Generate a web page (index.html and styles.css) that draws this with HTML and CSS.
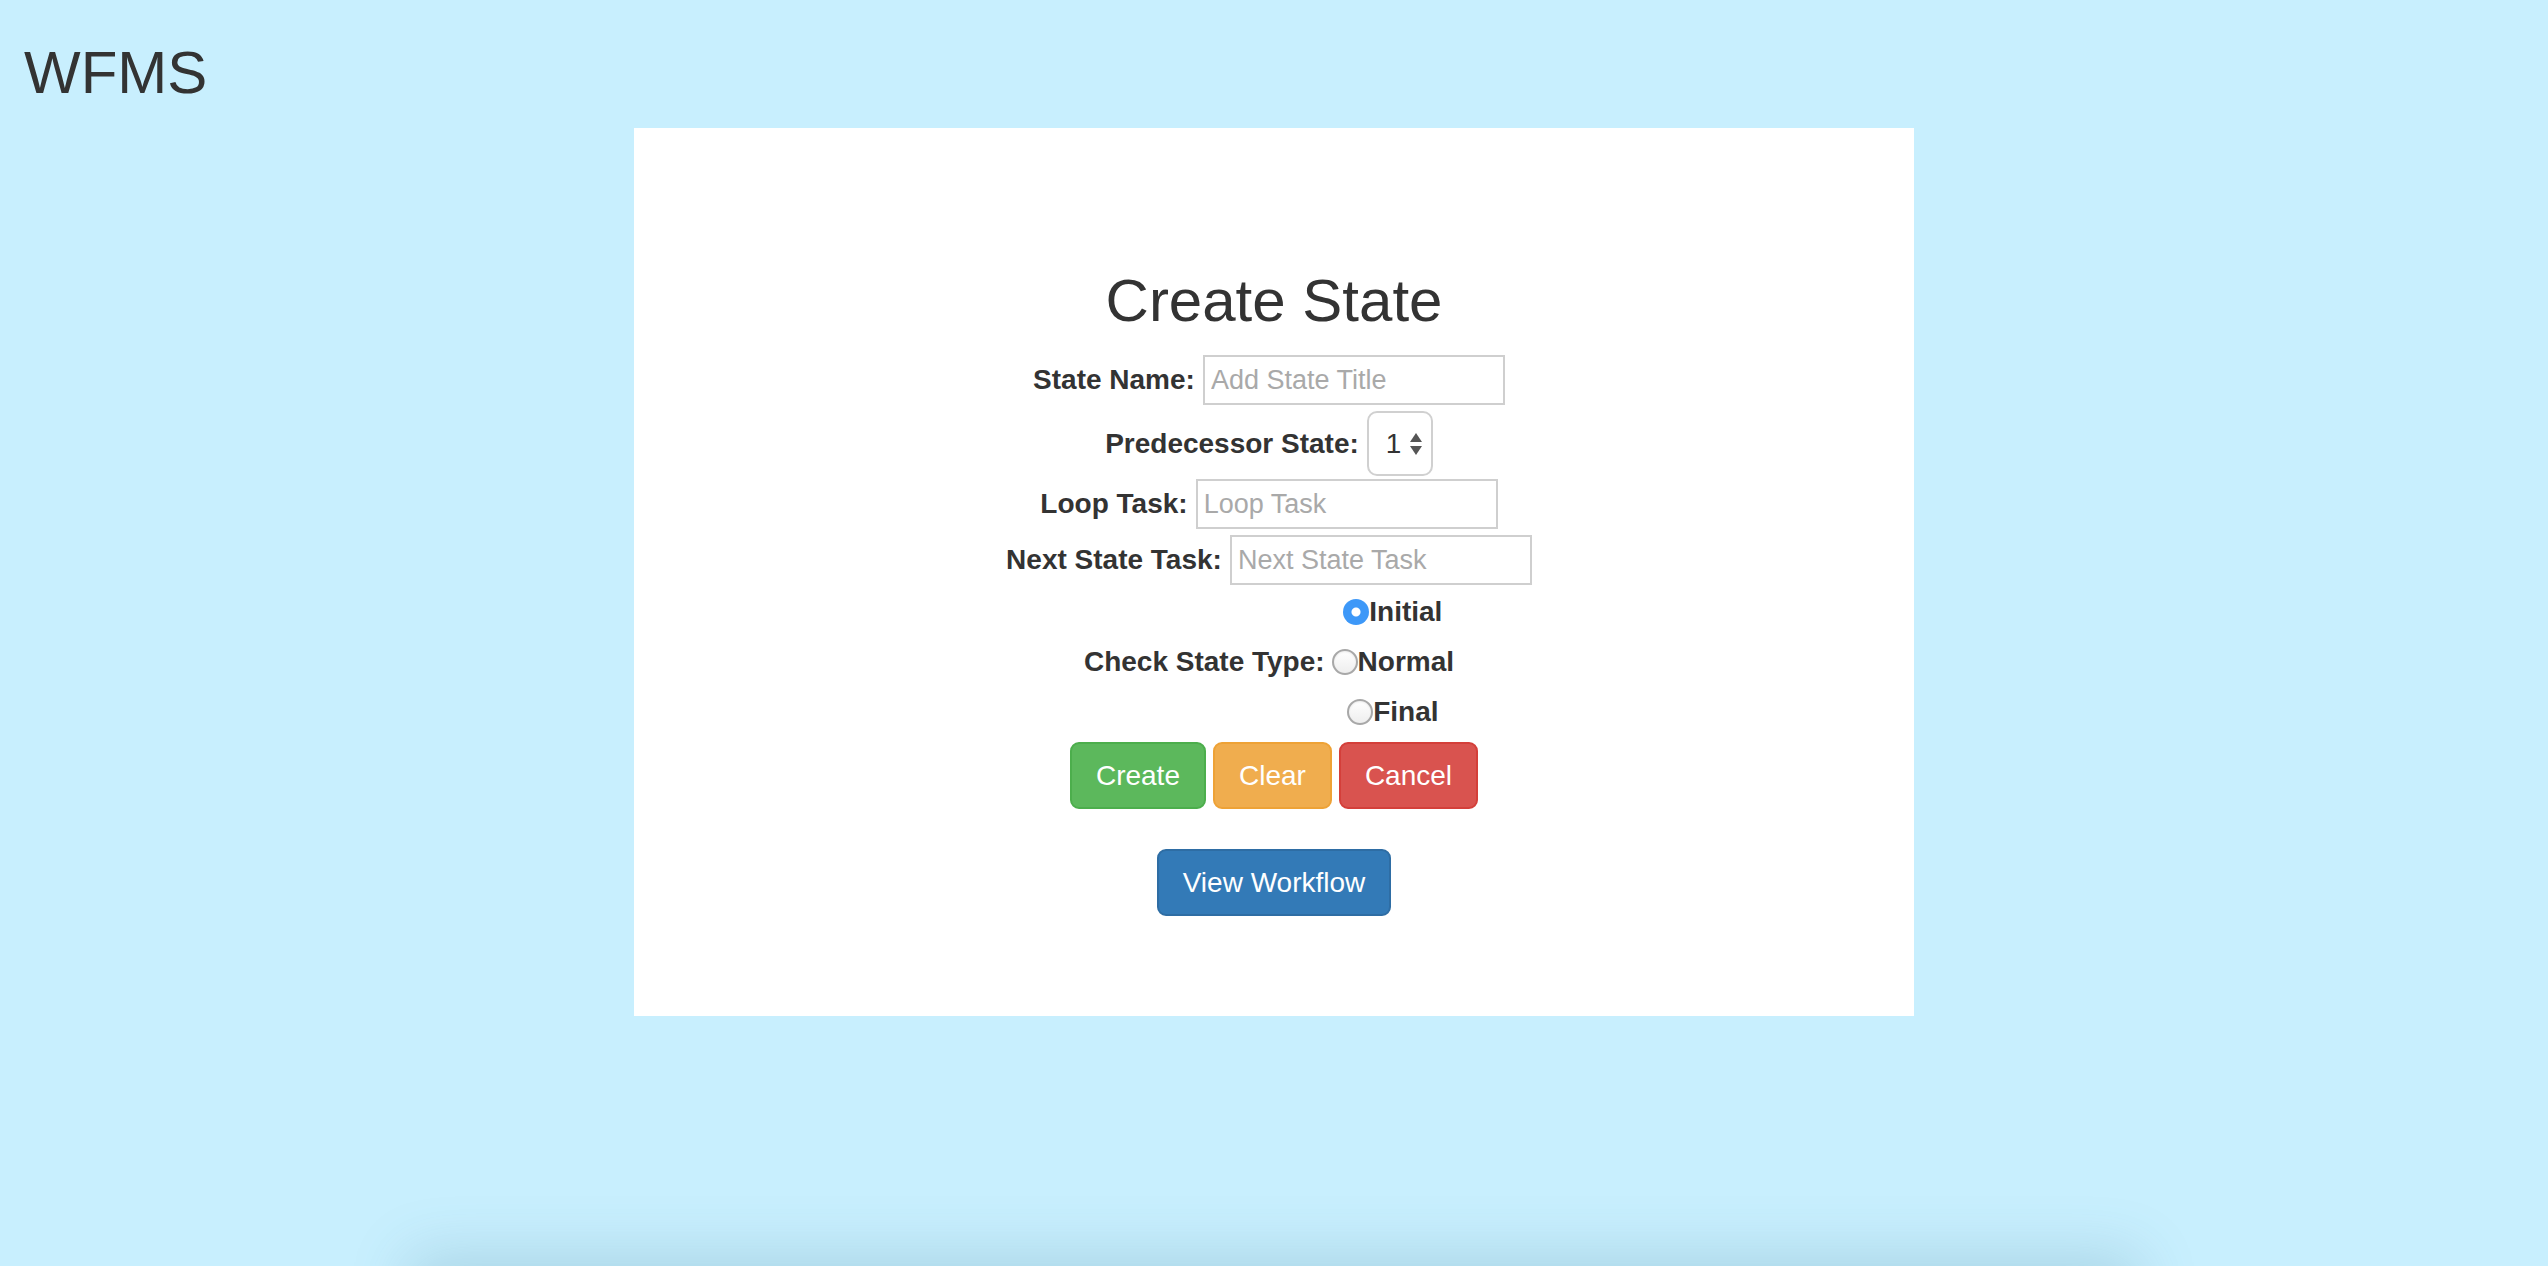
FILE: index.html
```html
<!DOCTYPE html>
<html>
<head>
<meta charset="utf-8">
<title>WFMS</title>
<link rel="stylesheet" href="styles.css">
</head>
<body>
<header class="brand">WFMS</header>
<main class="panel">
  <h1 class="title">Create State</h1>
  <form class="form">
    <div class="row">
      <label class="lbl" for="name">State Name:</label>
      <input class="field" id="name" type="text" placeholder="Add State Title">
    </div>
    <div class="row row-select">
      <label class="lbl" for="pred">Predecessor State:</label>
      <span class="select-wrap">
        <select class="select" id="pred"><option>1</option></select>
        <svg class="arrows" width="14" height="26" viewBox="0 0 14 26"><path d="M7 2 L13 11 L1 11 Z" fill="#555"/><path d="M7 24 L13 15 L1 15 Z" fill="#555"/></svg>
      </span>
    </div>
    <div class="row row-loop">
      <label class="lbl" for="loop">Loop Task:</label>
      <input class="field" id="loop" type="text" placeholder="Loop Task">
    </div>
    <div class="row row-next">
      <label class="lbl" for="next">Next State Task:</label>
      <input class="field" id="next" type="text" placeholder="Next State Task">
    </div>
    <div class="row row-radio">
      <span class="lbl">Check State Type:</span>
      <div class="radios">
        <label class="opt"><input type="radio" name="type" class="radio" checked>Initial</label>
        <label class="opt"><input type="radio" name="type" class="radio">Normal</label>
        <label class="opt"><input type="radio" name="type" class="radio">Final</label>
      </div>
    </div>
    <div class="actions">
      <button type="button" class="btn btn-success">Create</button>
      <button type="button" class="btn btn-warning">Clear</button>
      <button type="button" class="btn btn-danger">Cancel</button>
    </div>
    <div class="actions actions-view">
      <button type="button" class="btn btn-primary">View Workflow</button>
    </div>
  </form>
</main>
<div class="bottom-shade"></div>
</body>
</html>
```

FILE: styles.css
```css
html, body {
  margin: 0;
  padding: 0;
}
body {
  background: #c8effe;
  color: #333;
  font-family: "Liberation Sans", Arial, Helvetica, sans-serif;
  font-size: 28px;
  min-height: 100vh;
  overflow: hidden;
}
.brand {
  font-size: 60px;
  line-height: 60px;
  padding: 43px 0 0 24px;
  height: 60px;
}
.panel {
  width: 1280px;
  height: 888px;
  box-sizing: border-box;
  margin: 25px auto 0;
  background: #fff;
  padding-top: 143px;
  display: flex;
  flex-direction: column;
  align-items: center;
}
.title {
  margin: 0;
  font-size: 60px;
  font-weight: normal;
  line-height: 60px;
  text-align: center;
}
.form {
  margin-top: 24px;
  display: flex;
  flex-direction: column;
  align-items: center;
  width: 100%;
}
.row {
  display: flex;
  align-items: center;
  justify-content: center;
  padding-right: 10px;
}
.lbl {
  font-weight: bold;
  font-size: 28px;
  margin-right: 8px;
}
.field {
  width: 302px;
  height: 50px;
  box-sizing: border-box;
  border: 2px solid #cfcfcf;
  border-radius: 0;
  padding: 0 6px;
  font-family: inherit;
  font-size: 27px;
  color: #333;
  outline: none;
}
.field::placeholder {
  color: #a9a9a9;
}
.row-select {
  margin-top: 6px;
}
.row-loop {
  margin-top: 3px;
}
.row-next {
  margin-top: 6px;
}
.select-wrap {
  position: relative;
  display: inline-block;
}
.select {
  -webkit-appearance: none;
  appearance: none;
  width: 66px;
  height: 65px;
  box-sizing: border-box;
  border: 2px solid #d0d0d0;
  border-radius: 10px;
  background: #fff;
  padding: 0 0 0 17px;
  font-family: inherit;
  font-size: 28px;
  color: #333;
  outline: none;
}
.arrows {
  position: absolute;
  right: 10px;
  top: 20px;
  pointer-events: none;
}
.row-radio {
  margin-top: 2px;
}
.row-radio .lbl {
  margin-right: 7px;
}
.radios {
  display: flex;
  flex-direction: column;
  align-items: center;
}
.opt {
  height: 50px;
  display: flex;
  align-items: center;
  font-weight: bold;
  font-size: 28px;
}
.radio {
  -webkit-appearance: none;
  appearance: none;
  margin: 0;
  width: 26px;
  height: 26px;
  border-radius: 50%;
  box-sizing: border-box;
  border: 2px solid #a8a8a8;
  background: linear-gradient(#ffffff, #eeeeee);
  box-shadow: inset 0 1px 2px rgba(0,0,0,0.08);
}
.radio:checked {
  border: none;
  box-shadow: none;
  background: radial-gradient(circle, #ffffff 0 4px, #3d98f8 5px);
}
.actions {
  display: flex;
  justify-content: center;
  gap: 7px;
  margin-top: 5px;
}
.actions-view {
  margin-top: 40px;
}
.btn {
  height: 67px;
  box-sizing: border-box;
  padding: 0 24px;
  font-family: inherit;
  font-size: 28px;
  color: #fff;
  border: 2px solid transparent;
  border-radius: 9px;
  cursor: pointer;
}
.btn-success { background: #5cb85c; border-color: #4cae4c; }
.btn-warning { background: #f0ad4e; border-color: #eea236; }
.btn-danger { background: #d9534f; border-color: #d43f3a; }
.btn-primary { background: #337ab7; border-color: #2e6da4; }
.bottom-shade {
  position: fixed;
  left: 420px;
  right: 420px;
  bottom: -60px;
  height: 60px;
  box-shadow: 0 0 60px 10px rgba(60, 120, 140, 0.22);
}
```
